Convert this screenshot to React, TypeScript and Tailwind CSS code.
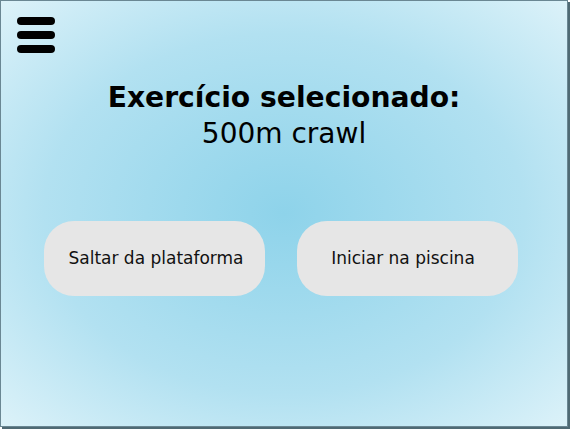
export default function App() {
    return (
        <div className="h-[429px] w-[570px] bg-white">
            <div
                className="flex h-[427px] w-[568px] flex-col border border-[#6a8793] bg-[radial-gradient(ellipse_at_center,#8ed3ea_0%,#b2e1f1_60%,#dcf2f9_100%)] shadow-[2px_2px_0_#4f6a74]"
                style={{ fontFamily: '"DejaVu Sans", sans-serif' }}
            >
                <button
                    type="button"
                    className="ml-[16px] mt-[16px] flex w-[38px] flex-col gap-[6px]"
                    aria-label="Menu"
                >
                    <span className="h-[8px] w-[38px] rounded-full bg-black" />
                    <span className="h-[8px] w-[38px] rounded-full bg-black" />
                    <span className="h-[8px] w-[38px] rounded-full bg-black" />
                </button>

                <div className="mt-[27px] flex flex-col items-center text-[28px] leading-[36px] text-black">
                    <h1 className="text-[28.2px] font-bold">Exercício selecionado:</h1>
                    <p>500m crawl</p>
                </div>

                <div className="mt-[69px] flex gap-[32px] pl-[43px]">
                    <button
                        type="button"
                        className="h-[75px] w-[221px] rounded-[30px] bg-[#e6e6e6] pl-[3px] text-[17px] text-[#111]"
                    >
                        Saltar da plataforma
                    </button>
                    <button
                        type="button"
                        className="h-[75px] w-[221px] rounded-[30px] bg-[#e6e6e6] pr-[9px] text-[17px] text-[#111]"
                    >
                        Iniciar na piscina
                    </button>
                </div>
            </div>
        </div>
    );
}
